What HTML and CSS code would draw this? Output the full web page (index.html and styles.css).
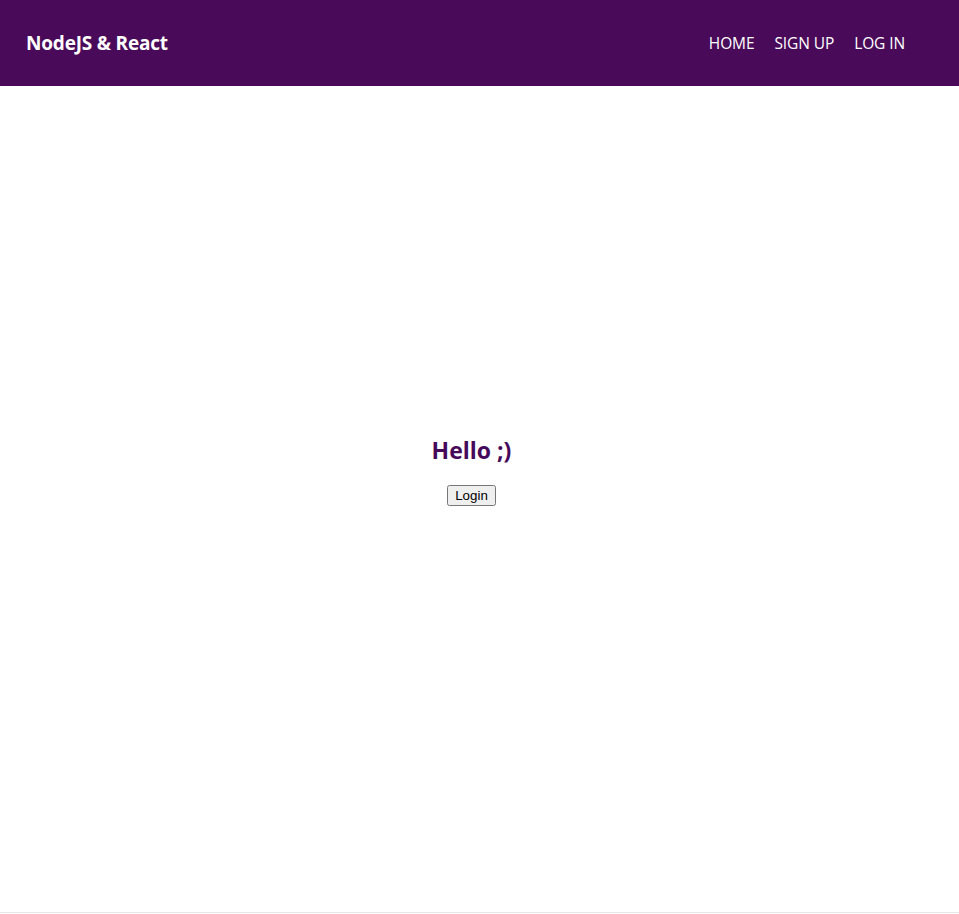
FILE: index.html
```html
<!DOCTYPE html>
<html>
<head>
<meta charset="utf-8">
<link rel="stylesheet" href="styles.css">
</head>
<body>
<header class="topbar">
  <div class="brand">NodeJS &amp; React</div>
  <nav class="nav">
    <a href="#">HOME</a>
    <a href="#">SIGN UP</a>
    <a href="#">LOG IN</a>
  </nav>
</header>
<main class="main">
  <h2 class="hello">Hello ;)</h2>
  <button class="login">Login</button>
</main>
</body>
</html>
```
FILE: styles.css
```css
html, body { margin: 0; padding: 0; background: #fff; }
body { font-family: "Open Sans", "Noto Sans", sans-serif; }
.topbar {
  height: 86px;
  background: #4a0a5a;
  display: flex;
  align-items: center;
  justify-content: space-between;
  padding: 0 54px 0 26px;
  box-sizing: border-box;
}
.brand { color: #fff; font-weight: 700; font-size: 19px; letter-spacing: -0.2px; }
.nav { display: flex; gap: 20px; }
.nav a { color: #fff; text-decoration: none; font-size: 15.5px; letter-spacing: -0.1px; }
.main {
  height: 827px;
  box-sizing: border-box;
  padding: 349px 16px 0 0;
  border-bottom: 1px solid #e6e6e6;
  display: flex;
  flex-direction: column;
  align-items: center;
}
.hello { margin: 0 0 20px; font-size: 23px; font-weight: 700; color: #46095a; line-height: 30px; }
.login { font-family: Arial, "Liberation Sans", sans-serif; font-size: 13.33px; padding: 1px 6px; }
```
